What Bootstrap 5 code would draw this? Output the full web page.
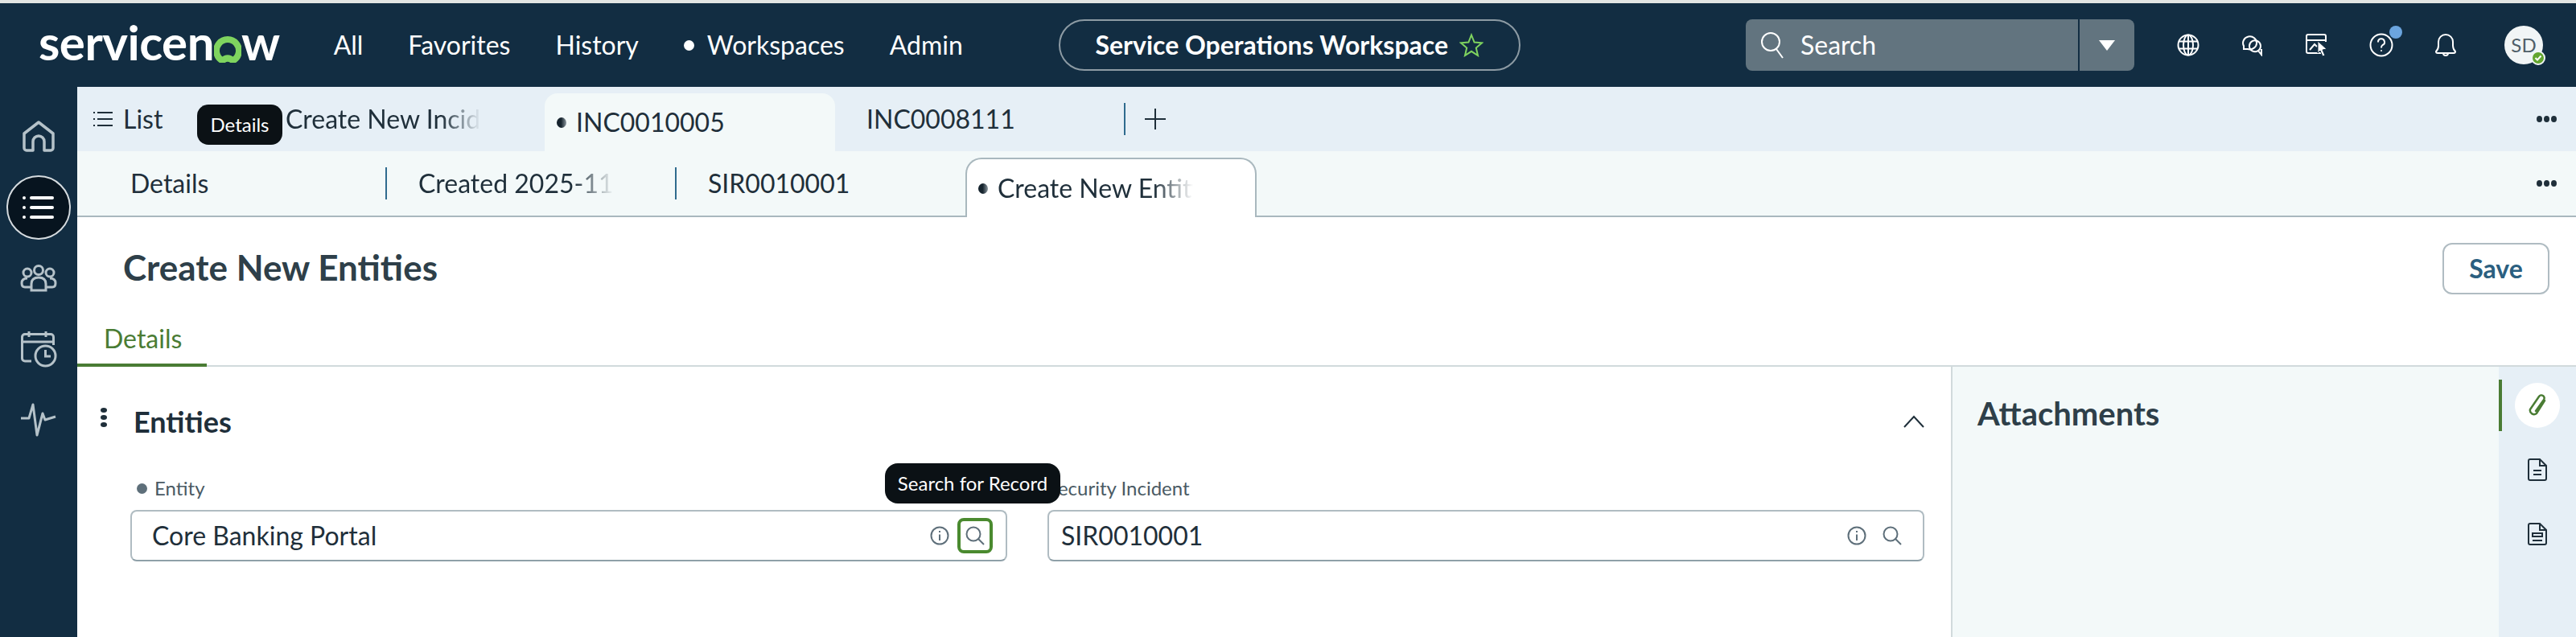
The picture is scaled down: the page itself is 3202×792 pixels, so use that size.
<!DOCTYPE html>
<html lang="en">
<head>
    <meta charset="UTF-8">
    <meta name="viewport" content="width=device-width, initial-scale=1.0">
    <title>Service Operations Workspace</title>
    <link href="https://cdn.jsdelivr.net/npm/bootstrap@5.3.0/dist/css/bootstrap.min.css" rel="stylesheet">
    <style>
        html, body { height: 100%; overflow: hidden; }
        body { font-family: Lato, "Liberation Sans", sans-serif; font-size: 32px; color: #1f2f3a; background: #fff; }
        svg { display: block; flex: none; }

        /* top bar */
        .top-strip { height: 4px; background: #e2e5e3; }
        .top-bar { height: 104px; background: #122d42; color: #fff; padding: 0 41px 0 48px; }
        .sn-logo { font-size: 60px; line-height: 1; font-weight: 700; letter-spacing: -.5px; margin-right: 67px; margin-top: -8px; height: 60px; }
        .top-menu { gap: 56px; line-height: 40px; }
        .live-dot { width: 13px; height: 13px; border-radius: 50%; background: currentColor; display: inline-block; }
        .workspace-pill { margin-left: 119px; width: 574px; height: 64px; border: 2px solid #8d9ba4; border-radius: 32px; font-weight: 700; gap: 14px; }
        .global-search { width: 483px; height: 64px; background: #62747f; border-radius: 8px; }
        .search-main { width: 415px; height: 100%; padding-left: 18px; gap: 20px; border-right: 2px solid #122d42; }
        .search-arrow { width: 0; height: 0; border-left: 10px solid transparent; border-right: 10px solid transparent; border-top: 13px solid #fff; }
        .top-icons { margin-left: 27px; }
        .top-icon { width: 80px; height: 64px; position: relative; }
        .notify-dot { position: absolute; width: 16px; height: 16px; border-radius: 50%; background: #6ba5df; top: 8px; left: 50px; }
        .user-avatar { width: 48px; height: 48px; border-radius: 50%; background: #f1f5f6; color: #4f5f69; font-size: 24px; margin-left: 33px; position: relative; }
        .user-status { position: absolute; right: -3px; bottom: -1px; width: 18px; height: 18px; border-radius: 50%; background: #63a52f; border: 2px solid #f1f5f6; }

        /* side rail */
        .page-body { height: 684px; }
        .side-rail { width: 96px; background: #122d42; padding-top: 22px; }
        .rail-slot { width: 80px; height: 80px; }
        .rail-active { background: #07141f; border: 2px solid #d5dbdf; border-radius: 50%; }

        /* tab rows */
        .tabs-one { height: 80px; background: #e6eff6; position: relative; }
        .tabs-two { height: 82px; background: #f3f9f9; border-bottom: 2px solid #a9b8be; position: relative; }
        .tab-list { width: 220px; padding-left: 20px; gap: 13px; }
        .tab-slot { width: 361px; padding-left: 39px; }
        .tab-slot-first { width: 385px; padding-left: 66px; }
        .tab-split { border-right: 2px solid #2f6b8e; height: 40px; }
        .tab-open { width: 361px; height: 72px; margin-top: 8px; background: #f3f9f9; border-radius: 16px 16px 0 0; padding-left: 15px; gap: 12px; }
        .tab-open-two { width: 362px; height: 74px; margin: 8px 0 -2px -1px; background: #fff; border: 2px solid #a9b8be; border-bottom: 0; border-radius: 20px 20px 0 0; padding-left: 14px; gap: 12px; }
        .tab-fade { width: 248px; overflow: hidden; white-space: nowrap; -webkit-mask-image: linear-gradient(to right, #000 78%, transparent 98%); mask-image: linear-gradient(to right, #000 78%, transparent 98%); }
        .tab-dot { width: 12px; height: 13px; border-radius: 50%; background: linear-gradient(to right, #16242e 45%, #8b979e); display: inline-block; flex: none; }
        .more-dots { position: absolute; right: 24px; top: 50%; margin-top: -4px; gap: 2px; }
        .more-dots i { width: 7px; height: 8px; border-radius: 50%; background: #1f2f3a; display: block; }
        .dark-tip { position: absolute; background: #0b1115; color: #fff; font-size: 24px; z-index: 5; white-space: nowrap; }
        .tip-details { left: 149px; top: 22px; width: 106px; height: 50px; border-radius: 14px; }
        .tip-search { left: 1004px; top: 120px; width: 218px; height: 50px; border-radius: 16px; }

        /* record header */
        .record-head { height: 120px; padding: 32px 33px 0 57px; }
        .record-title { font-size: 44px; font-weight: 700; color: #2e3f49; margin: 0; line-height: 60px; }
        .save-btn { width: 133px; height: 64px; border: 2px solid #b0bcc2; border-radius: 12px; background: #fff; color: #2b5f80; font-size: 32px; font-weight: 700; padding: 0; }
        .record-tabs { height: 66px; border-bottom: 2px solid #d1dadc; }
        .record-tab { width: 161px; height: 66px; margin-bottom: -2px; padding-left: 33px; color: #4a7c34; border-bottom: 4px solid #4a7c34; font-size: 32px; }

        /* form */
        .record-form { height: 336px; position: relative; }
        .form-side { width: 2329px; padding: 0 33px 0 66px; }
        .section-head { height: 136px; margin-left: -37px; padding-right: 0; position: relative; }
        .drag-dots { gap: 3px; width: 8px; margin-right: 33px; margin-top: -10px; }
        .drag-dots i { width: 8px; height: 6px; background: #1f2f3a; border-radius: 50%; display: block; }
        .section-title { font-size: 36px; font-weight: 700; color: #1f2f3a; margin: 0; line-height: 44px; }
        .field-row { gap: 50px; }
        .field-label { font-size: 24px; color: #4a5a64; height: 30px; line-height: 30px; margin-bottom: 12px; gap: 9px; padding-left: 8px; }
        .field-dot { width: 13px; height: 13px; border-radius: 50%; background: #5e6f7a; display: inline-block; }
        .field-box { height: 64px; border: 2px solid #b0bcc2; border-bottom-color: #8fa0a8; border-radius: 8px; padding: 0 16px 0 25px; }
        .field-value { font-size: 32px; color: #1f2f3a; }
        .field-icons { margin-left: auto; gap: 10px; }
        .icon-btn { width: 44px; height: 44px; border-radius: 8px; }
        .icon-btn-focus { border: 4px solid #4a8a2f; }
        .attach-side { width: 681px; background: #f3f9f9; border-left: 2px solid #d1dadc; padding: 34px 0 0 31px; }
        .attach-title { font-size: 40px; font-weight: 700; color: #2e3f49; margin: 0; line-height: 48px; }
        .attach-rail { width: 96px; background: #e6eff6; padding-top: 16px; }
        .rail-tool { height: 64px; margin-bottom: 16px; }
        .rail-tool-active { border-left: 4px solid #4a7c34; padding-right: 4px; }
        .tool-circle { width: 56px; height: 56px; border-radius: 50%; background: #fff; }
    </style>
</head>
<body>
<div class="top-strip"></div>

<!-- Верхняя панель -->
<nav class="top-bar d-flex align-items-center">
    <div class="sn-logo d-flex align-items-end">
        <span>servicen</span>
        <svg width="34" height="34" viewBox="0 0 34 34" class="mb-1"><path d="M10.5 31.5 A14 14 0 1 1 23.5 31.5 Q17 25.5 10.5 31.5 Z" fill="none" stroke="#7fd45f" stroke-width="8"/></svg>
        <span>w</span>
    </div>
    <div class="top-menu d-flex align-items-center">
        <span>All</span>
        <span>Favorites</span>
        <span>History</span>
        <span class="d-flex align-items-center gap-3"><i class="live-dot"></i>Workspaces</span>
        <span>Admin</span>
    </div>
    <div class="workspace-pill d-flex align-items-center justify-content-center">
        <span>Service Operations Workspace</span>
        <svg width="30" height="30" viewBox="0 0 30 30"><path d="M15 2.5 L18.6 11.6 L28 12.3 L20.8 18.5 L23 28 L15 22.8 L7 28 L9.2 18.5 L2 12.3 L11.4 11.6 Z" fill="none" stroke="#7fd45f" stroke-width="2"/></svg>
    </div>
    <div class="d-flex align-items-center ms-auto">
        <div class="global-search d-flex align-items-center">
            <div class="search-main d-flex align-items-center">
                <svg width="30" height="34" viewBox="0 0 30 34" fill="none" stroke="#fff" stroke-width="2"><circle cx="13" cy="13" r="11"/><path d="M20 22 L28 33"/></svg>
                <span>Search</span>
            </div>
            <div class="flex-fill d-flex justify-content-center"><i class="search-arrow"></i></div>
        </div>
        <div class="top-icons d-flex align-items-center">
            <div class="top-icon d-flex align-items-center justify-content-center">
                <svg width="28" height="28" viewBox="0 0 28 28" fill="none" stroke="#fff" stroke-width="2"><circle cx="14" cy="14" r="12.5"/><ellipse cx="14" cy="14" rx="6" ry="12.5"/><path d="M14 1.5 V26.5 M2.5 9.5 H25.5 M2.5 18.5 H25.5"/></svg>
            </div>
            <div class="top-icon d-flex align-items-center justify-content-center">
                <svg width="28" height="28" viewBox="0 0 28 28" fill="none" stroke="#fff" stroke-width="2"><path d="M3 19 V15 A8.5 8 0 1 1 8 19 Z"/><path d="M10 15 A7 7 0 1 1 21 21 L25 26 V19"/><path d="M10 15 A7 7 0 0 0 21 21" /></svg>
            </div>
            <div class="top-icon d-flex align-items-center justify-content-center">
                <svg width="30" height="30" viewBox="0 0 30 30" fill="none" stroke="#fff" stroke-width="2"><path d="M22 25 H4 A2 2 0 0 1 2 23 V4 A2 2 0 0 1 4 2 H24 A2 2 0 0 1 26 4 V11"/><path d="M2 9 H26"/><path d="M6 21 L12 14 L15 17"/><path d="M16 10 L27 20 L22 21 L25 28 L22 29 L19 22 L16 25 Z" fill="#fff" stroke="#122d42" stroke-width="1"/></svg>
            </div>
            <div class="top-icon d-flex align-items-center justify-content-center">
                <svg width="30" height="30" viewBox="0 0 30 30" fill="none" stroke="#fff" stroke-width="2"><circle cx="15" cy="15" r="13.5"/><path d="M11 11.5 A4 4 0 1 1 16.5 15 Q15 16 15 18.5"/><circle cx="15" cy="22" r="1" fill="#fff" stroke="none"/></svg>
                <i class="notify-dot"></i>
            </div>
            <div class="top-icon d-flex align-items-center justify-content-center">
                <svg width="28" height="30" viewBox="0 0 28 30" fill="none" stroke="#fff" stroke-width="2"><path d="M2 23 Q5 20 5 16 V11 A9 9 0 0 1 23 11 V16 Q23 20 26 23 Q26 25 24 25 H4 Q2 25 2 23 Z"/><path d="M11 25 A3 3 0 0 0 17 25"/></svg>
            </div>
        </div>
        <div class="user-avatar d-flex align-items-center justify-content-center">
            SD
            <span class="user-status d-flex align-items-center justify-content-center">
                <svg width="10" height="10" viewBox="0 0 10 10" fill="none" stroke="#fff" stroke-width="2"><path d="M1.5 5 L4 7.5 L8.5 2.5"/></svg>
            </span>
        </div>
    </div>
</nav>

<div class="page-body d-flex">
    <!-- Боковая панель -->
    <aside class="side-rail d-flex flex-column align-items-center">
        <div class="rail-slot d-flex align-items-center justify-content-center mb-1">
            <svg width="40" height="40" viewBox="0 0 40 40" fill="none" stroke="#b5c2c9" stroke-width="3.5" stroke-linejoin="round"><path d="M2 16 L20 2 L38 16 V34 A3 3 0 0 1 35 37 H27 V26 A7 7 0 0 0 13 26 V37 H5 A3 3 0 0 1 2 34 Z"/></svg>
        </div>
        <div class="rail-slot rail-active d-flex align-items-center justify-content-center mt-1">
            <svg width="40" height="28" viewBox="0 0 40 28" fill="#fff"><circle cx="2" cy="2" r="2"/><circle cx="2" cy="14" r="2"/><circle cx="2" cy="26" r="2"/><rect x="9" y="0" width="30" height="4" rx="2"/><rect x="9" y="12" width="30" height="4" rx="2"/><rect x="9" y="24" width="30" height="4" rx="2"/></svg>
        </div>
        <div class="rail-slot d-flex align-items-center justify-content-center mt-2">
            <svg width="46" height="34" viewBox="0 0 46 34" fill="none" stroke="#b5c2c9" stroke-width="3"><circle cx="23" cy="7" r="5.5"/><circle cx="9" cy="10" r="5"/><circle cx="37" cy="10" r="5"/><path d="M14 32 V24 Q14 16 23 16 Q32 16 32 24 V32 Z"/><path d="M13 28 H6 Q2 28 2 23 Q2 17 9 17"/><path d="M33 28 H40 Q44 28 44 23 Q44 17 37 17"/></svg>
        </div>
        <div class="rail-slot d-flex align-items-center justify-content-center mt-2">
            <svg width="46" height="46" viewBox="0 0 46 46" fill="none" stroke="#b5c2c9" stroke-width="3"><path d="M14 38 H6 A3.5 3.5 0 0 1 2.5 34.500 V8 A3.500 3.500 0 0 1 6 4.500 H38 A3.500 3.500 0 0 1 41.500 8 V18"/><path d="M2.500 14 H41.500 M11 1 V8 M32 1 V8"/><circle cx="31.500" cy="31.500" r="12.500"/><path d="M31.500 24 V32 H38"/></svg>
        </div>
        <div class="rail-slot d-flex align-items-center justify-content-center mt-2">
            <svg width="46" height="42" viewBox="0 0 46 42" fill="none" stroke="#b5c2c9" stroke-width="3" stroke-linejoin="round"><path d="M1 19 H11 L16 2 L21 40 L28 13 L31 21 L44 17"/></svg>
        </div>
    </aside>

    <main class="flex-fill d-flex flex-column">
        <!-- Вкладки -->
        <div class="tabs-one d-flex align-items-center">
            <div class="tab-list d-flex align-items-center">
                <svg width="24" height="20" viewBox="0 0 24 20" fill="#1f2f3a"><rect x="0" y="1" width="2" height="2"/><rect x="0" y="9" width="2" height="2"/><rect x="0" y="17" width="2" height="2"/><rect x="5" y="1" width="19" height="2"/><rect x="5" y="9" width="19" height="2"/><rect x="5" y="17" width="19" height="2"/></svg>
                <span>List</span>
            </div>
            <div class="tab-slot"><div class="tab-fade">Create New Incident</div></div>
            <div class="tab-open d-flex align-items-center"><i class="tab-dot"></i><span>INC0010005</span></div>
            <div class="tab-slot tab-split d-flex align-items-center">INC0008111</div>
            <svg class="ms-4" width="26" height="26" viewBox="0 0 26 26" stroke="#1f2f3a" stroke-width="2"><path d="M13 0 V26 M0 13 H26"/></svg>
            <div class="more-dots d-flex"><i></i><i></i><i></i></div>
            <div class="dark-tip tip-details d-flex align-items-center justify-content-center">Details</div>
        </div>
        <div class="tabs-two d-flex align-items-center">
            <div class="tab-slot-first tab-split d-flex align-items-center">Details</div>
            <div class="tab-slot tab-split d-flex align-items-center" style="width:360px"><div class="tab-fade">Created 2025-11-20</div></div>
            <div class="tab-slot d-flex align-items-center" style="width:360px">SIR0010001</div>
            <div class="tab-open-two d-flex align-items-center"><i class="tab-dot"></i><div class="tab-fade">Create New Entities</div></div>
            <div class="more-dots d-flex"><i></i><i></i><i></i></div>
        </div>

        <!-- Заголовок записи -->
        <div class="record-head d-flex justify-content-between align-items-start">
            <h1 class="record-title">Create New Entities</h1>
            <button class="btn save-btn" type="button">Save</button>
        </div>
        <div class="record-tabs d-flex">
            <div class="record-tab d-flex align-items-center">Details</div>
        </div>

        <div class="record-form d-flex">
            <section class="form-side">
                <div class="section-head d-flex align-items-center">
                    <div class="drag-dots d-flex flex-column"><i></i><i></i><i></i></div>
                    <h2 class="section-title">Entities</h2>
                    <svg class="ms-auto" width="26" height="16" viewBox="0 0 26 16" fill="none" stroke="#1f2f3a" stroke-width="2"><path d="M1 15 L13 2 L25 15"/></svg>
                </div>
                <div class="field-row d-flex">
                    <div class="flex-fill w-50">
                        <div class="field-label d-flex align-items-center"><i class="field-dot"></i><span>Entity</span></div>
                        <div class="field-box d-flex align-items-center">
                            <span class="field-value">Core Banking Portal</span>
                            <div class="field-icons d-flex align-items-center">
                                <svg width="24" height="24" viewBox="0 0 24 24" fill="none" stroke="#5e6f7a" stroke-width="2"><circle cx="12" cy="12" r="10.500"/><path d="M12 10.500 V18 M12 6 V8"/></svg>
                                <div class="icon-btn icon-btn-focus d-flex align-items-center justify-content-center">
                                    <svg width="24" height="24" viewBox="0 0 24 24" fill="none" stroke="#5e6f7a" stroke-width="2"><circle cx="10" cy="10" r="8.500"/><path d="M16 16 L23 23"/></svg>
                                </div>
                            </div>
                        </div>
                    </div>
                    <div class="flex-fill w-50">
                        <div class="field-label d-flex align-items-center ps-0"><span>Security Incident</span></div>
                        <div class="field-box d-flex align-items-center" style="padding-left:15px">
                            <span class="field-value">SIR0010001</span>
                            <div class="field-icons d-flex align-items-center">
                                <svg width="24" height="24" viewBox="0 0 24 24" fill="none" stroke="#5e6f7a" stroke-width="2"><circle cx="12" cy="12" r="10.500"/><path d="M12 10.500 V18 M12 6 V8"/></svg>
                                <div class="icon-btn d-flex align-items-center justify-content-center">
                                    <svg width="24" height="24" viewBox="0 0 24 24" fill="none" stroke="#5e6f7a" stroke-width="2"><circle cx="10" cy="10" r="8.500"/><path d="M16 16 L23 23"/></svg>
                                </div>
                            </div>
                        </div>
                    </div>
                </div>
                <div class="dark-tip tip-search d-flex align-items-center justify-content-center">Search for Record</div>
            </section>
            <section class="attach-side">
                <h2 class="attach-title">Attachments</h2>
            </section>
            <section class="attach-rail">
                <div class="rail-tool rail-tool-active d-flex align-items-center justify-content-center">
                    <div class="tool-circle d-flex align-items-center justify-content-center">
                        <svg width="26" height="30" viewBox="0 0 26 30" fill="none" stroke="#4a7c34" stroke-width="2.500" stroke-linecap="round"><path d="M22 9 L12 25 A5 5 0 0 1 4 20 L15 4 A3.500 3.500 0 0 1 21 8 L11 22"/></svg>
                    </div>
                </div>
                <div class="rail-tool d-flex align-items-center justify-content-center">
                    <svg width="24" height="28" viewBox="0 0 24 28" fill="none" stroke="#1f2f3a" stroke-width="2"><path d="M15 1 H3 A2 2 0 0 0 1 3 V25 A2 2 0 0 0 3 27 H21 A2 2 0 0 0 23 25 V9 Z M15 1 V9 H23"/><path d="M7 15 H17 M7 20 H17"/></svg>
                </div>
                <div class="rail-tool d-flex align-items-center justify-content-center">
                    <svg width="24" height="28" viewBox="0 0 24 28" fill="none" stroke="#1f2f3a" stroke-width="2"><path d="M15 1 H3 A2 2 0 0 0 1 3 V25 A2 2 0 0 0 3 27 H21 A2 2 0 0 0 23 25 V9 Z M15 1 V9 H23"/><rect x="6" y="13" width="12" height="4"/><path d="M6 22 H18"/></svg>
                </div>
            </section>
        </div>
    </main>
</div>

<script src="https://cdn.jsdelivr.net/npm/bootstrap@5.3.0/dist/js/bootstrap.bundle.min.js"></script>
</body>
</html>
